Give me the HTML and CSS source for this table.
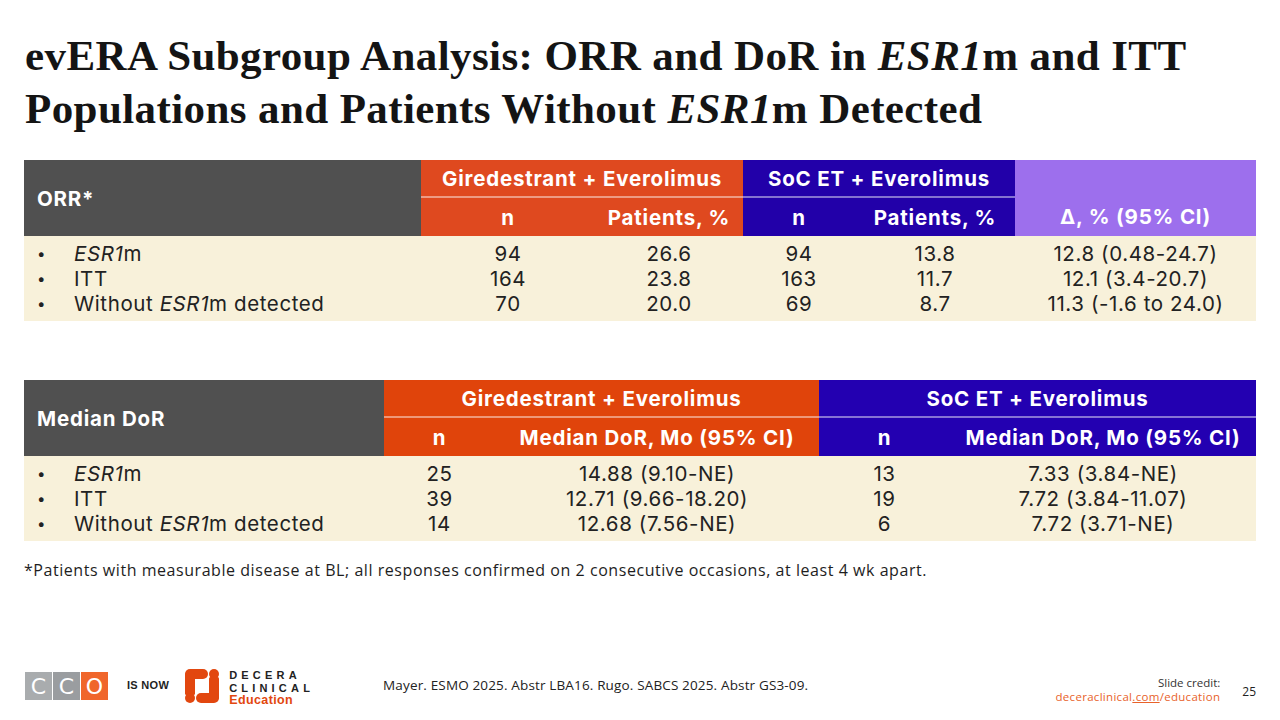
FILE: index.html
```html
<!DOCTYPE html>
<html lang="en">
<head>
<meta charset="utf-8">
<title>evERA Subgroup Analysis</title>
<link rel="stylesheet" href="styles.css">
</head>
<body>
<div class="slide">
  <h1 class="title">evERA Subgroup Analysis: ORR and DoR in <i>ESR1</i>m and ITT<br>Populations and Patients Without <i>ESR1</i>m Detected</h1>

  <table class="data t1">
    <colgroup><col class="c1-1"><col class="c1-2"><col class="c1-3"><col class="c1-4"><col class="c1-5"><col class="c1-6"></colgroup>
    <thead>
      <tr>
        <th class="lab" rowspan="2">ORR*</th>
        <th class="org grp" colspan="2">Giredestrant + Everolimus</th>
        <th class="blu grp" colspan="2">SoC ET + Everolimus</th>
        <th class="pur delta" rowspan="2">Δ, % (95% CI)</th>
      </tr>
      <tr>
        <th class="org sub">n</th>
        <th class="org sub">Patients, %</th>
        <th class="blu sub">n</th>
        <th class="blu sub">Patients, %</th>
      </tr>
    </thead>
    <tbody>
      <tr class="first"><td class="rl"><span class="bul">•</span><i>ESR1</i>m</td><td>94</td><td>26.6</td><td>94</td><td>13.8</td><td>12.8 (0.48-24.7)</td></tr>
      <tr><td class="rl"><span class="bul">•</span>ITT</td><td>164</td><td>23.8</td><td>163</td><td>11.7</td><td>12.1 (3.4-20.7)</td></tr>
      <tr class="last"><td class="rl"><span class="bul">•</span>Without <i>ESR1</i>m detected</td><td>70</td><td>20.0</td><td>69</td><td>8.7</td><td>11.3 (-1.6 to 24.0)</td></tr>
    </tbody>
  </table>

  <table class="data t2">
    <colgroup><col class="c2-1"><col class="c2-2"><col class="c2-3"><col class="c2-4"><col class="c2-5"></colgroup>
    <thead>
      <tr>
        <th class="lab" rowspan="2">Median DoR</th>
        <th class="org2 grp" colspan="2">Giredestrant + Everolimus</th>
        <th class="blu2 grp" colspan="2">SoC ET + Everolimus</th>
      </tr>
      <tr>
        <th class="org2 sub">n</th>
        <th class="org2 sub">Median DoR, Mo (95% CI)</th>
        <th class="blu2 sub">n</th>
        <th class="blu2 sub">Median DoR, Mo (95% CI)</th>
      </tr>
    </thead>
    <tbody>
      <tr class="first"><td class="rl"><span class="bul">•</span><i>ESR1</i>m</td><td>25</td><td>14.88 (9.10-NE)</td><td>13</td><td>7.33 (3.84-NE)</td></tr>
      <tr><td class="rl"><span class="bul">•</span>ITT</td><td>39</td><td>12.71 (9.66-18.20)</td><td>19</td><td>7.72 (3.84-11.07)</td></tr>
      <tr class="last"><td class="rl"><span class="bul">•</span>Without <i>ESR1</i>m detected</td><td>14</td><td>12.68 (7.56-NE)</td><td>6</td><td>7.72 (3.71-NE)</td></tr>
    </tbody>
  </table>

  <p class="note">*Patients with measurable disease at BL; all responses confirmed on 2 consecutive occasions, at least 4 wk apart.</p>

  <footer class="foot">
    <div class="cco">
      <span class="sq g1">C</span><span class="sq g2">C</span><span class="sq o">O</span>
    </div>
    <span class="isnow">IS NOW</span>
    <div class="decera">
      <svg class="dmark" width="34" height="34" viewBox="0 0 34 34">
        <rect x="0" y="0" width="23" height="10" rx="5" fill="#E2470F"/>
        <circle cx="29" cy="5" r="5" fill="#E2470F"/>
        <rect x="0" y="4" width="10" height="22" rx="1.5" fill="#E2470F"/>
        <rect x="24" y="8" width="10" height="22" rx="1.5" fill="#E2470F"/>
        <rect x="11" y="24" width="23" height="10" rx="5" fill="#E2470F"/>
        <circle cx="5" cy="29" r="5" fill="#E2470F"/>
      </svg>
      <div class="dtext">
        <span class="dl">DECERA</span>
        <span class="dl">CLINICAL</span>
        <span class="ded">Education</span>
      </div>
    </div>
    <p class="refs">Mayer. ESMO 2025. Abstr LBA16. Rugo. SABCS 2025. Abstr GS3-09.</p>
    <div class="credit">
      <span class="cr1">Slide credit:</span>
      <span class="cr2">deceraclinical<u>.com</u>/education</span>
    </div>
    <span class="pg">25</span>
  </footer>
</div>
</body>
</html>
```

FILE: styles.css
```css
html, body {
  margin: 0;
  padding: 0;
  background: #ffffff;
}

.slide {
  width: 1280px;
  height: 720px;
  display: flex;
  flex-direction: column;
  box-sizing: border-box;
  padding: 29px 24px 0 24px;
  font-family: "Open Sans", "Liberation Sans", sans-serif;
  color: #1a1a1a;
}

.title {
  margin: 0 0 25px 1px;
  font-family: "Liberation Serif", serif;
  font-weight: 700;
  font-size: 43px;
  line-height: 53px;
  color: #141414;
  letter-spacing: 0.4px;
}

.data {
  width: 1232px;
  border-collapse: collapse;
  table-layout: fixed;
  font-family: "Inter", "Open Sans", sans-serif;
  font-size: 20.5px;
}

.c1-1 { width: 397px; }
.c1-2 { width: 174px; }
.c1-3 { width: 148px; }
.c1-4 { width: 112px; }
.c1-5 { width: 160px; }
.c1-6 { width: 241px; }

.c2-1 { width: 360px; }
.c2-2 { width: 111px; }
.c2-3 { width: 324px; }
.c2-4 { width: 131px; }
.c2-5 { width: 306px; }

.data th {
  color: #ffffff;
  font-weight: 700;
  font-size: 20.5px;
  letter-spacing: 0.8px;
  padding: 0;
  text-align: center;
  line-height: 25px;
  white-space: nowrap;
}

.data .grp {
  height: 36px;
  border-bottom: 2px solid rgba(255, 255, 255, 0.45);
}

.data .sub {
  height: 38px;
}

.data .lab {
  background: #505050;
  text-align: left;
  padding-left: 13px;
}

.data .org { background: #DF491F; }
.data .blu { background: #2200A9; }
.data .org2 { background: #E0440B; }
.data .blu2 { background: #2300B1; }
.data .pur { background: #9D6FED; }

.data .delta {
  vertical-align: bottom;
  padding-bottom: 7px;
}

.data td {
  background: #F8F1DA;
  text-align: center;
  padding: 0;
  height: 25px;
  line-height: 25px;
  color: #222222;
  font-weight: 400;
  white-space: nowrap;
  letter-spacing: 0.6px;
}

.data tr.first td { padding-top: 5px; }
.data tr.last td { padding-bottom: 5px; }

.data td.rl {
  text-align: left;
  padding-left: 12px;
}

.bul {
  display: inline-block;
  width: 37px;
  font-size: 15px;
  vertical-align: top;
  padding-left: 1px;
}

.t2 {
  margin-top: 59px;
}

.note {
  margin: 19px 0 0 0;
  font-size: 16px;
  line-height: 20px;
  color: #1e1e1e;
  letter-spacing: 0.55px;
}

.foot {
  margin-top: auto;
  height: 62px;
  display: flex;
  align-items: flex-start;
  padding-top: 5px;
  box-sizing: border-box;
}

.cco {
  display: flex;
  gap: 1px;
  margin: 9px 0 0 1px;
}

.sq {
  width: 27px;
  height: 28px;
  display: flex;
  align-items: center;
  justify-content: center;
  color: #ffffff;
  font-family: "DejaVu Sans", sans-serif;
  font-size: 22px;
  font-weight: 400;
}

.g1 { background: #A9ACAE; }
.g2 { background: #9A9DA0; }
.o { background: #F0662B; }

.isnow {
  margin: 16px 0 0 19px;
  font-family: "Liberation Sans", sans-serif;
  font-weight: 700;
  font-size: 11px;
  color: #1f1f1f;
  letter-spacing: 0.3px;
}

.decera {
  display: flex;
  margin: 6px 0 0 16px;
  gap: 10px;
}

.dtext {
  display: flex;
  flex-direction: column;
  margin-top: 0;
}

.dl {
  font-family: "Liberation Sans", sans-serif;
  font-weight: 700;
  font-size: 11px;
  line-height: 12.5px;
  letter-spacing: 4.2px;
  color: #222222;
}

.ded {
  font-family: "Liberation Sans", sans-serif;
  font-weight: 700;
  font-size: 12.5px;
  line-height: 13px;
  letter-spacing: 0.4px;
  color: #E2470F;
}

.refs {
  margin: 13px 0 0 69px;
  font-size: 13.5px;
  line-height: 18px;
  color: #222222;
  letter-spacing: 0.15px;
  flex: 1;
}

.credit {
  display: flex;
  flex-direction: column;
  align-items: flex-end;
  margin-top: 13px;
  font-size: 11.5px;
  line-height: 14px;
}

.cr1 { color: #333333; }
.cr2 { color: #E8622A; letter-spacing: 0.3px; }
.cr2 u { text-decoration-thickness: 1px; }

.pg {
  margin: 20px 0 0 22px;
  font-size: 12px;
  color: #222222;
}
```
